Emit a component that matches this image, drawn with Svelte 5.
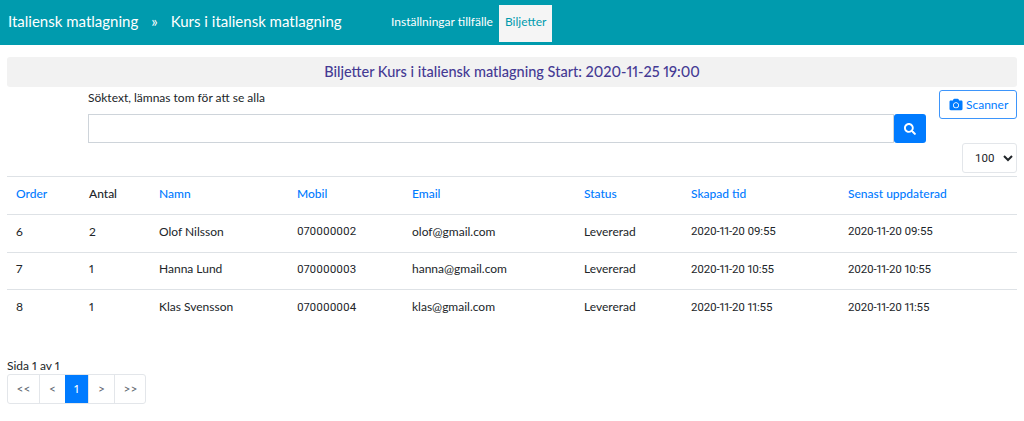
<script>
  const columns = [
    { label: "Order", link: true },
    { label: "Antal", link: false },
    { label: "Namn", link: true },
    { label: "Mobil", link: true },
    { label: "Email", link: true },
    { label: "Status", link: true },
    { label: "Skapad tid", link: true },
    { label: "Senast uppdaterad", link: true },
  ];

  const tickets = [
    { order: 6, antal: 2, namn: "Olof Nilsson", mobil: "070000002", email: "olof@gmail.com", status: "Levererad", skapad: "2020-11-20 09:55", uppdaterad: "2020-11-20 09:55" },
    { order: 7, antal: 1, namn: "Hanna Lund", mobil: "070000003", email: "hanna@gmail.com", status: "Levererad", skapad: "2020-11-20 10:55", uppdaterad: "2020-11-20 10:55" },
    { order: 8, antal: 1, namn: "Klas Svensson", mobil: "070000004", email: "klas@gmail.com", status: "Levererad", skapad: "2020-11-20 11:55", uppdaterad: "2020-11-20 11:55" },
  ];

  const pages = ["<<", "<", "1", ">", ">>"];
</script>

<header class="topbar">
  <div class="crumbs">
    <span>Italiensk matlagning</span>
    <span class="sep">»</span>
    <span>Kurs i italiensk matlagning</span>
  </div>
  <nav class="tabs">
    <span class="tab">Inställningar tillfälle</span>
    <span class="tab active">Biljetter</span>
  </nav>
</header>

<main class="content">
  <h1 class="title">Biljetter Kurs i italiensk matlagning Start: 2020-11-25 19:00</h1>

  <div class="search-row">
    <div class="search">
      <label for="search-text">Söktext, lämnas tom för att se alla</label>
      <div class="search-input">
        <input id="search-text" type="text" />
        <button class="search-btn" aria-label="Sök">
          <svg width="12" height="12" viewBox="0 0 512 512" fill="#fff">
            <path d="M505 442.700L405.300 343c-4.500-4.500-10.600-7-17-7H372c27.600-35.300 44-79.700 44-128C416 93.100 322.900 0 208 0S0 93.100 0 208s93.100 208 208 208c48.300 0 92.700-16.400 128-44v16.300c0 6.400 2.500 12.500 7 17l99.700 99.700c9.400 9.400 24.600 9.400 33.900 0l28.300-28.300c9.400-9.400 9.400-24.600.1-34zM208 336c-70.700 0-128-57.200-128-128 0-70.700 57.200-128 128-128 70.700 0 128 57.200 128 128 0 70.700-57.200 128-128 128z" />
          </svg>
        </button>
      </div>
    </div>
    <button class="scanner">
      <svg width="14" height="13" viewBox="0 0 512 512" fill="#007bff">
        <path d="M512 144v288c0 26.500-21.500 48-48 48H48c-26.500 0-48-21.500-48-48V144c0-26.500 21.500-48 48-48h88l12.300-32.900c7-18.700 24.900-31.100 44.900-31.100h125.500c20 0 37.900 12.400 44.900 31.100L376 96h88c26.500 0 48 21.500 48 48zM376 288c0-66.200-53.800-120-120-120s-120 53.800-120 120 53.800 120 120 120 120-53.800 120-120zm-32 0c0 48.500-39.500 88-88 88s-88-39.500-88-88 39.500-88 88-88 88 39.500 88 88z" />
      </svg>
      Scanner
    </button>
  </div>

  <div class="size-row">
    <select class="size">
      <option>100</option>
    </select>
  </div>

  <table>
    <thead>
      <tr>
        {#each columns as col}
          <th class:link={col.link}>{col.label}</th>
        {/each}
      </tr>
    </thead>
    <tbody>
      {#each tickets as t}
        <tr>
          <td>{t.order}</td>
          <td>{t.antal}</td>
          <td>{t.namn}</td>
          <td class="num">{t.mobil}</td>
          <td>{t.email}</td>
          <td>{t.status}</td>
          <td class="num date">{t.skapad}</td>
          <td class="num date">{t.uppdaterad}</td>
        </tr>
      {/each}
    </tbody>
  </table>

  <div class="pager-label">Sida 1 av 1</div>
  <div class="pager">
    {#each pages as p}
      <span class="page" class:current={p === "1"}>{p}</span>
    {/each}
  </div>
</main>

<style>
  :global(body) {
    margin: 0;
    background: #fff;
    font-family: Lato, "Open Sans", sans-serif;
    font-size: 12px;
    font-variant-numeric: proportional-nums;
    color: #212529;
  }

  .topbar {
    display: flex;
    align-items: flex-start;
    height: 45px;
    background: #009bae;
    color: #fff;
  }

  .crumbs {
    display: flex;
    gap: 13px;
    width: 382px;
    padding: 12px 0 0 8px;
    box-sizing: border-box;
    font-size: 15px;
    line-height: 19px;
  }

  .tabs {
    display: flex;
    padding-top: 5px;
  }

  .tab {
    padding: 0 6px 0 9px;
    height: 37px;
    line-height: 33px;
    font-size: 12px;
  }

  .tab.active {
    padding: 0 6px;
    background: #f5f5f5;
    color: #009bae;
  }

  .content {
    padding: 12px 7px 0;
  }

  .title {
    margin: 0;
    height: 30px;
    line-height: 29px;
    background: #f2f2f2;
    border-radius: 3px;
    color: #453a94;
    font-size: 14.5px;
    font-weight: 500;
    text-align: center;
  }

  .search-row {
    display: flex;
    align-items: flex-start;
    justify-content: space-between;
    padding-left: 81px;
  }

  .search {
    width: 838px;
    padding-top: 2px;
  }

  .search label {
    display: block;
    height: 25px;
    line-height: 17px;
    font-size: 12px;
  }

  .search-input {
    display: flex;
    align-items: center;
  }

  .search-input input {
    flex: 1;
    height: 29px;
    padding: 0;
    box-sizing: border-box;
    border: 1px solid #ced4da;
    background: #fff;
  }

  .search-btn {
    display: flex;
    align-items: center;
    justify-content: center;
    width: 32px;
    height: 29px;
    padding: 0;
    border: none;
    border-radius: 3px;
    background: #007bff;
  }

  .scanner {
    display: flex;
    align-items: center;
    gap: 3px;
    margin-top: 3px;
    width: 78px;
    height: 29px;
    padding: 0 0 0 9px;
    box-sizing: border-box;
    border: 1px solid #3d95fb;
    border-radius: 3px;
    background: #fff;
    color: #007bff;
    font-family: inherit;
    font-size: 12px;
  }

  .size-row {
    display: flex;
    justify-content: flex-end;
  }

  .size {
    width: 55px;
    height: 30px;
    padding-left: 8px;
    border: 1px solid #e3e6ea;
    border-radius: 3px;
    background: #fff;
    color: #212529;
    font-family: Roboto, sans-serif;
    font-size: 11.5px;
  }

  table {
    width: 1010px;
    margin-top: 3px;
    border-collapse: collapse;
    table-layout: fixed;
    font-size: 12px;
  }

  th, td {
    box-sizing: border-box;
    padding: 0 0 0 9px;
    text-align: left;
    border-top: 1px solid #dee2e6;
  }

  th {
    height: 38px;
    padding-bottom: 5px;
    font-weight: 500;
    border-bottom: 1px solid #dee2e6;
  }

  th.link {
    color: #007bff;
  }

  td {
    height: 37.5px;
    padding-bottom: 4px;
  }

  /* Lato's digits run wider than the reference's, Roboto is closer */
  td.num {
    font-family: Roboto, sans-serif;
    font-size: 11.5px;
  }

  td.date {
    letter-spacing: -0.2px;
  }

  th:nth-child(1) { width: 73px; }
  th:nth-child(2) { width: 70px; }
  th:nth-child(3) { width: 138px; }
  th:nth-child(4) { width: 115px; }
  th:nth-child(5) { width: 172px; }
  th:nth-child(6) { width: 107px; }
  th:nth-child(7) { width: 157px; }

  .pager-label {
    margin-top: 30px;
    height: 17px;
    line-height: 17px;
    font-size: 12px;
  }

  .pager {
    display: flex;
    width: 139px;
    height: 30px;
    border: 1px solid #e3e6ea;
    border-radius: 3px;
    box-sizing: border-box;
  }

  .page {
    flex: 0 0 auto;
    box-sizing: border-box;
    width: 26px;
    text-align: center;
    line-height: 28px;
    border-left: 1px solid #e3e6ea;
    color: #5f6871;
    font-size: 12px;
  }

  .page:first-child {
    width: 31px;
    border-left: none;
  }

  .page:last-child {
    width: 32px;
  }

  .page.current {
    width: 23px;
    background: #007bff;
    border-left: none;
    color: #fff;
  }
</style>
